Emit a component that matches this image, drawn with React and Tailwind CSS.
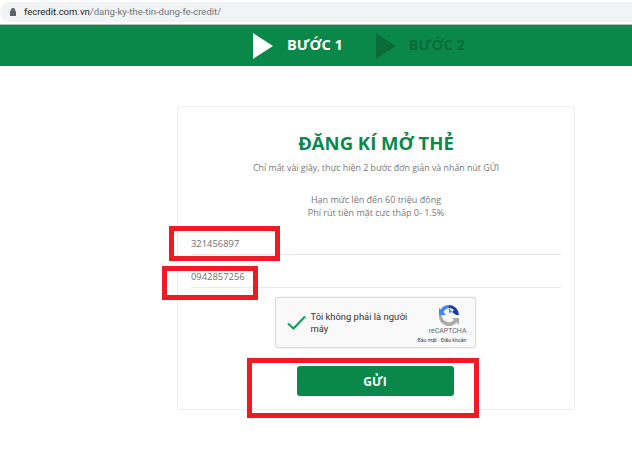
const OS = { fontFamily: '"Open Sans", "Noto Sans", sans-serif' };

function Step({ label, dim }) {
  return (
    <div className={`flex items-center ${dim ? "gap-[13px]" : "gap-[14px]"}`}>
      <svg width="20" height="26" viewBox="0 0 20 26" className="block">
        <path d="M0 0L20 13L0 26Z" fill={dim ? "#0a6b3a" : "#ffffff"} />
      </svg>
      <span className={`text-[14.5px] font-bold leading-none ${dim ? "text-[#0a6b3a]" : "text-white"}`}>{label}</span>
    </div>
  );
}

function Field({ value }) {
  return (
    <div className="h-[33px] border-b border-[#e9e9e9] flex items-end pb-[4px] text-[9.4px] leading-[13px] text-[#6f6f6f]">
      {value}
    </div>
  );
}

function Captcha() {
  return (
    <div className="w-[201px] h-[51px] mx-auto border border-[#dcdcdc] rounded-[3px] bg-[#f9f9f9] shadow-[0_0_2px_rgba(0,0,0,0.12)] flex items-center pl-[11px] pr-[8px] text-left" style={{ fontFamily: "Roboto, sans-serif" }}>
      <svg width="19" height="15" viewBox="0 0 19 15" className="shrink-0">
        <path d="M1 8.500L6.500 13.500L18 1.500" fill="none" stroke="#0f9d58" strokeWidth="2" />
      </svg>
      <div className="ml-[5px] mt-[1px] w-[104px] text-[9.4px] leading-[12px] text-[#333]">Tôi không phải là người máy</div>
      <div className="ml-auto pt-[3px] flex flex-col items-end">
        <svg width="22" height="22" viewBox="0 0 22 22" className="mr-[7px]">
          <path d="M11 1A10 10 0 0 1 21 11L18 11L14 8L16 6A7 7 0 0 0 11 4Z" fill="#1c3aa9" />
          <path d="M11 1A10 10 0 0 0 2.500 5.500L1 4V11H8L5.500 8A7 7 0 0 1 11 4L14 8L11 9Z" fill="#4285f4" />
          <path d="M1 11H4A7 7 0 0 0 16 16L14 14H21V21L18.500 18.500A10 10 0 0 1 1 11Z" fill="#ababab" />
        </svg>
        <div className="text-[7px] leading-[9px] text-[#666] mt-[1px]">reCAPTCHA</div>
        <div className="text-[5.2px] leading-[7px] text-[#444] mt-[1px] whitespace-nowrap">Bảo mật · Điều khoản</div>
      </div>
    </div>
  );
}

function RedBox({ className }) {
  return <div className={`absolute border-[5px] border-[#ed1c24] ${className}`} />;
}

export default function App() {
  return (
    <div className="relative w-[632px] h-[450px] overflow-hidden bg-white" style={OS}>
      <div className="h-[25px] bg-white pt-[2px] border-b border-[#b4bfb8]">
        <div className="h-[20px] rounded-l-full bg-[#f1f3f4] flex items-center pl-[10px] gap-[8px]">
          <svg width="6" height="8" viewBox="0 0 6 8" className="shrink-0">
            <path d="M0 3.500H6V8H0Z M1.200 3.500V2A1.800 1.800 0 0 1 4.800 2V3.500" fill="#5f6368" stroke="#5f6368" strokeWidth="0.7" />
          </svg>
          <span className="text-[9.5px] text-[#222] whitespace-nowrap" style={{ fontFamily: "Roboto, sans-serif" }}>
            fecredit.com.vn<span className="text-[#70757a]">/dang-ky-the-tin-dung-fe-credit/</span>
          </span>
        </div>
      </div>

      <div className="h-[41px] bg-[#0a884a] flex items-center pl-[253px] gap-[33px]">
        <Step label="BƯỚC 1" />
        <Step label="BƯỚC 2" dim />
      </div>

      <div className="ml-[177px] mt-[40px] w-[398px] h-[304px] border border-[#ececec] rounded-[4px] px-[13px] pt-[24px] text-center">
        <h1 className="text-[18.5px] leading-[24px] font-bold text-[#0a884a]">ĐĂNG KÍ MỞ THẺ</h1>
        <p className="mt-[6px] text-[8.85px] leading-[14px] text-[#777]">Chỉ mất vài giây, thực hiện 2 bước đơn giản và nhấn nút GỬI</p>
        <p className="mt-[18px] text-[9px] leading-[13px] text-[#777]">
          Hạn mức lên đến 60 triệu đồng
          <br />
          Phí rút tiền mặt cực thấp 0- 1.5%
        </p>
        <div className="mt-[3px] text-left">
          <Field value="321456897" />
          <Field value="0942857256" />
        </div>
        <div className="mt-[9px] pr-[2px]">
          <Captcha />
        </div>
        <div className="mt-[18px] pr-[2px] flex justify-center">
          <button className="w-[157px] h-[30px] rounded-[3px] bg-[#0a884a] text-white text-[12px] font-bold pt-[1px]">GỬI</button>
        </div>
      </div>

      <RedBox className="left-[169px] top-[226px] w-[111px] h-[35px]" />
      <RedBox className="left-[162px] top-[266px] w-[96px] h-[34px]" />
      <RedBox className="left-[247px] top-[358px] w-[232px] h-[60px]" />
    </div>
  );
}
